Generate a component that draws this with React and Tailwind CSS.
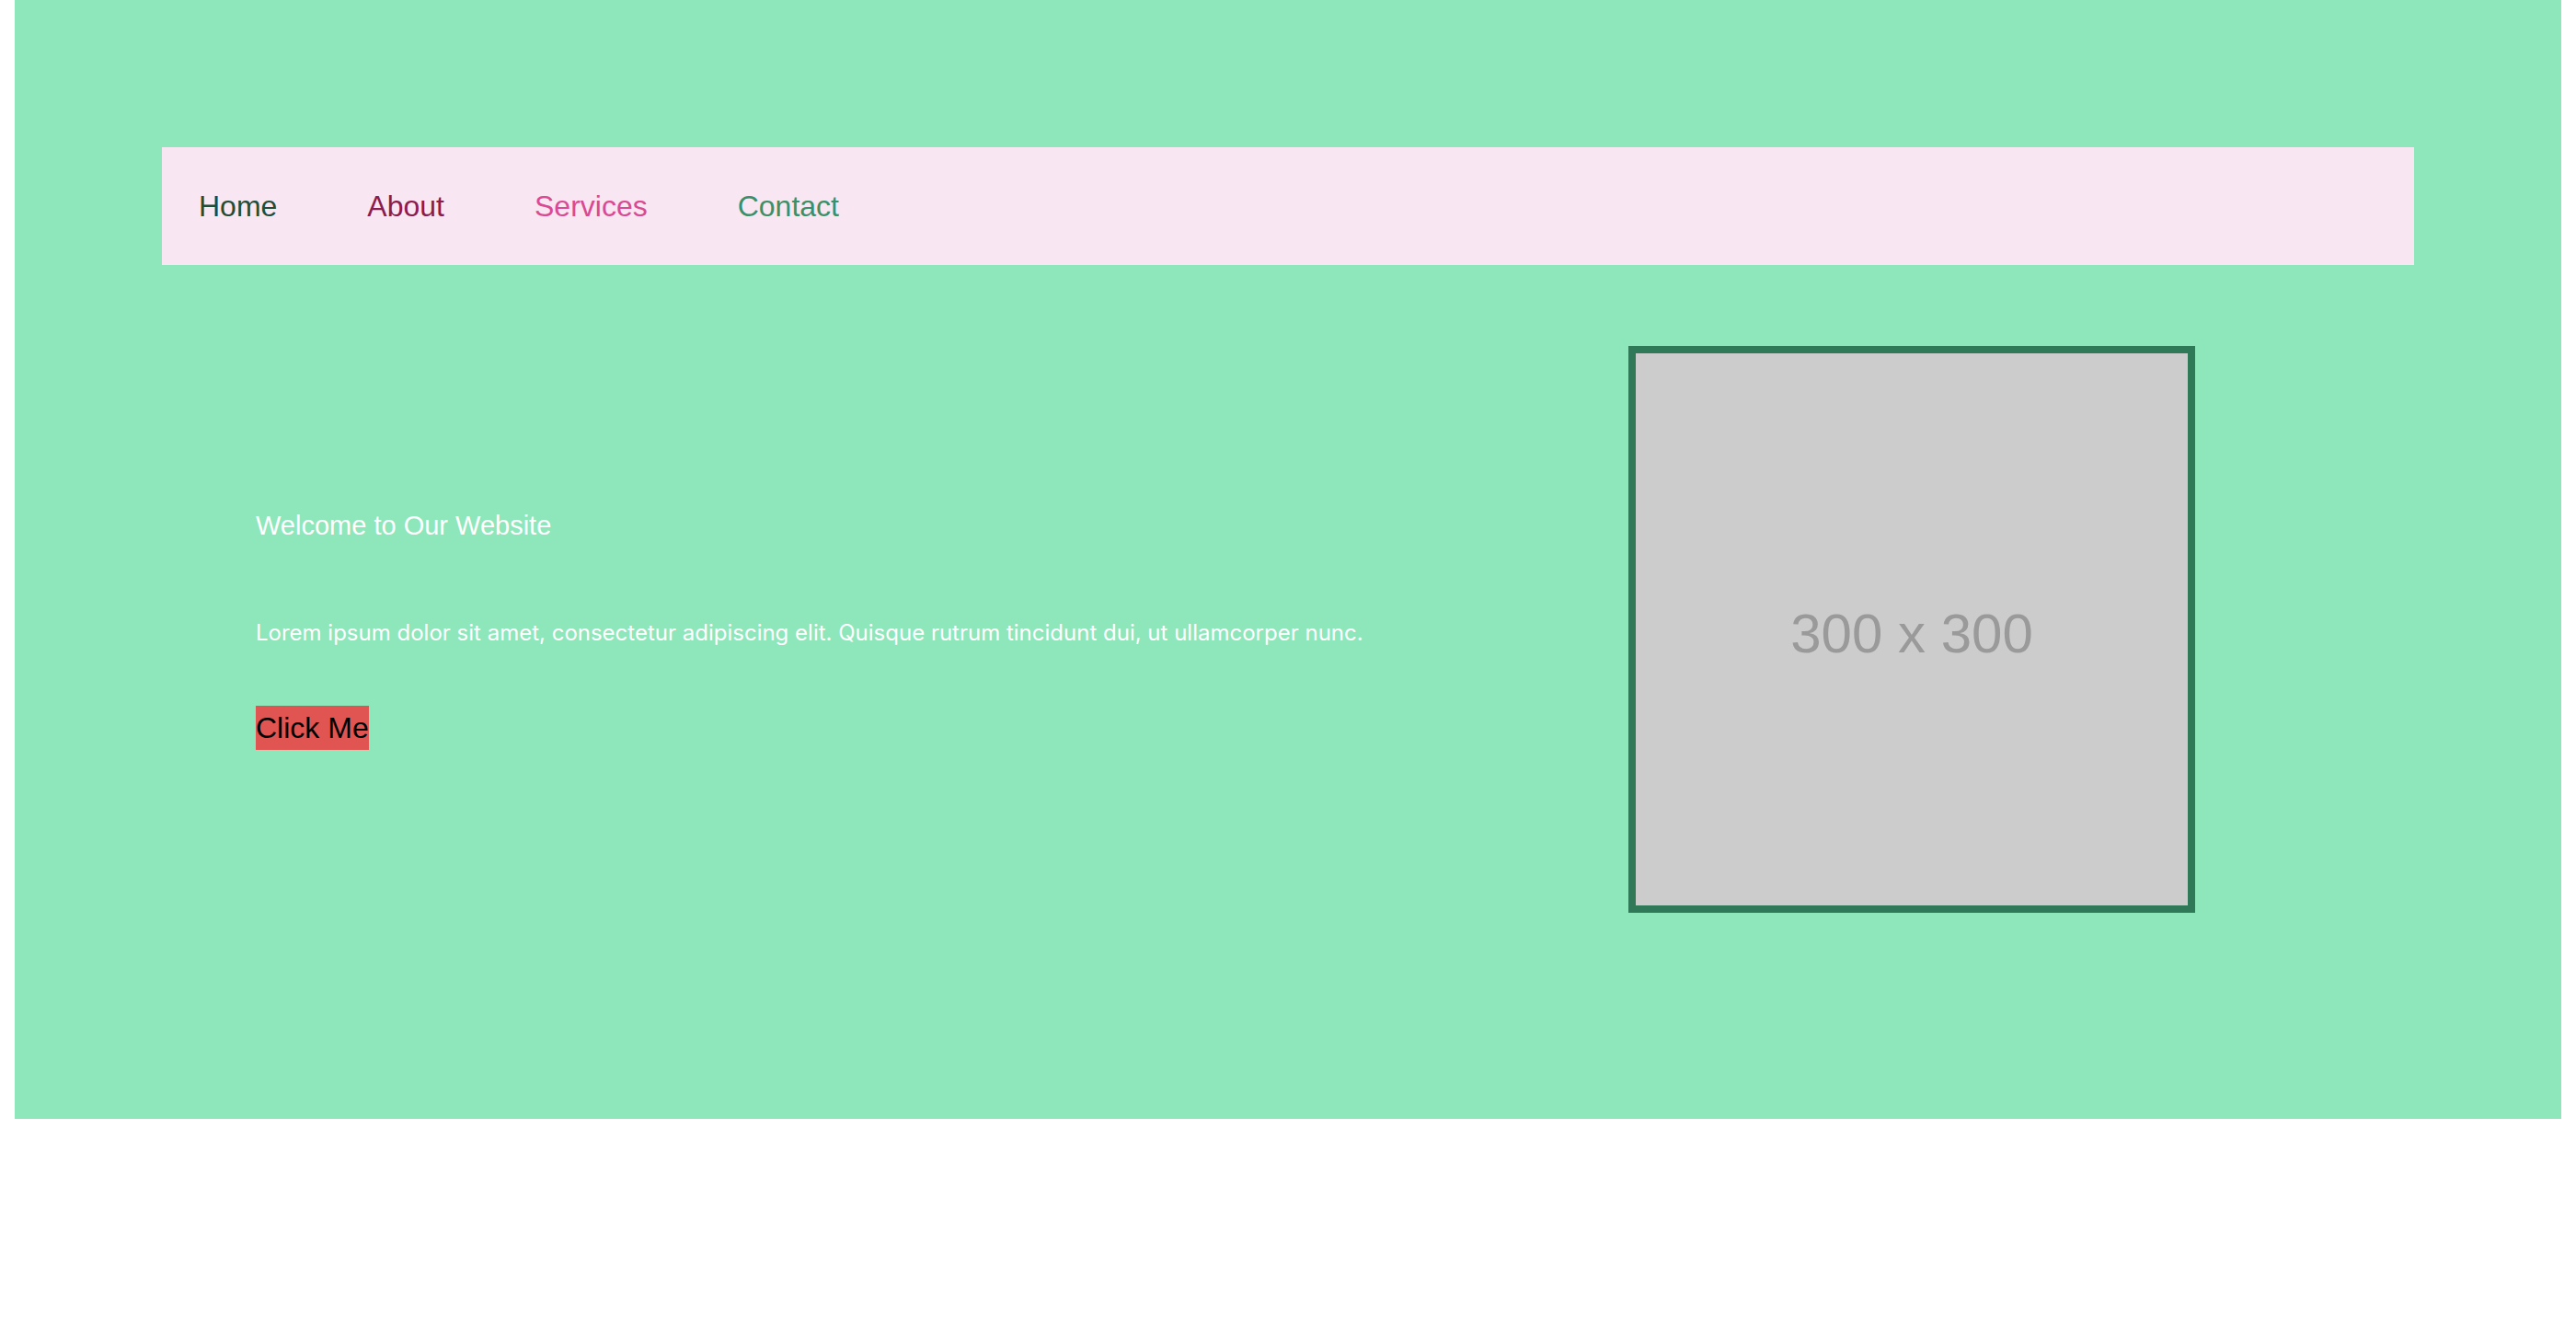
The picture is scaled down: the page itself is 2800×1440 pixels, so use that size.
import React from 'react';

const links = [
  { label: 'Home', color: 'text-[#1e4d3a]' },
  { label: 'About', color: 'text-[#8b1c4b]' },
  { label: 'Services', color: 'text-[#d94a90]' },
  { label: 'Contact', color: 'text-[#3a9068]' },
];

export default function App() {
  return (
    <div className="min-h-screen bg-white font-['Liberation_Sans',Arial,sans-serif]">
      <section className="mx-[16px] bg-[#8ee6bb] pt-[160px] pb-[224px]">
        <nav className="mx-[160px] flex h-[128px] items-center gap-[98px] bg-[#f8e6f2] pl-[40px]">
          {links.map((l) => (
            <a key={l.label} href="#" className={`text-[32px] leading-[48px] ${l.color}`}>
              {l.label}
            </a>
          ))}
        </nav>

        <div className="mt-[88px] flex items-center justify-between pl-[262px] pr-[398px]">
          <div className="mb-[4px] flex flex-col items-start text-white">
            <h1 className="text-[29px] leading-[42px]">Welcome to Our Website</h1>
            <p className="mt-[78px] font-['Inter',sans-serif] text-[24px] leading-[36px] whitespace-nowrap">
              Lorem ipsum dolor sit amet, consectetur adipiscing elit. Quisque rutrum tincidunt dui, ut ullamcorper nunc.
            </p>
            <button className="mt-[61px] h-[48px] bg-[#e05552] text-[32px] leading-[48px] text-black">
              Click Me
            </button>
          </div>

          <div className="flex h-[616px] w-[616px] items-center justify-center border-[8px] border-[#2f7858] bg-[#cccccc] pt-[10px]">
            <span className="text-[60px] text-[#9a9a9a]">300 x 300</span>
          </div>
        </div>
      </section>
    </div>
  );
}
